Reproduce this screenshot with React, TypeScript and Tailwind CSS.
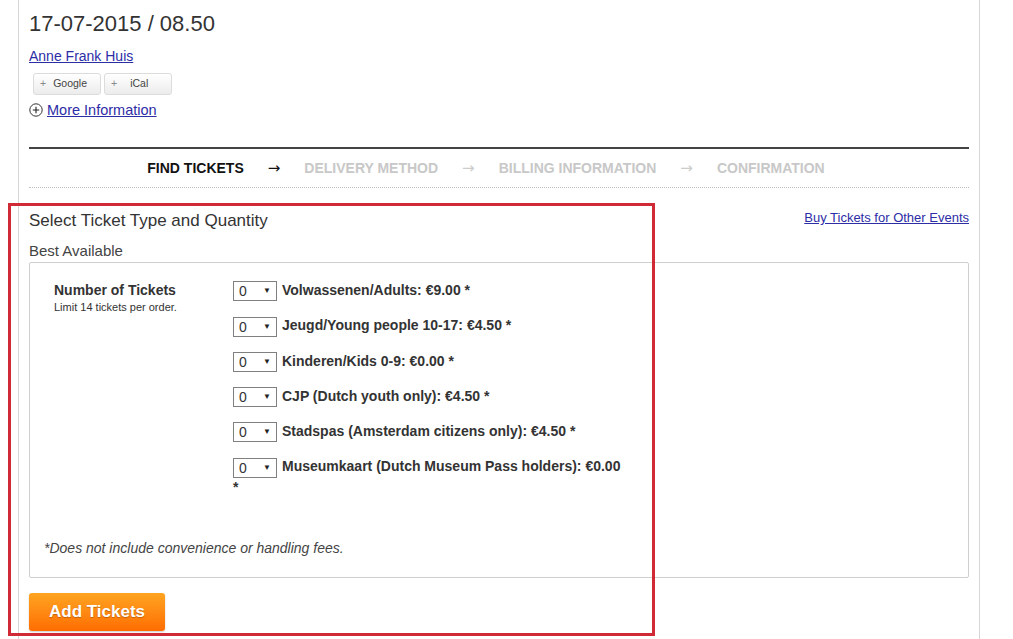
import React from 'react';

const rows = [
  'Volwassenen/Adults: €9.00 *',
  'Jeugd/Young people 10-17: €4.50 *',
  'Kinderen/Kids 0-9: €0.00 *',
  'CJP (Dutch youth only): €4.50 *',
  'Stadspas (Amsterdam citizens only): €4.50 *',
  'Museumkaart (Dutch Museum Pass holders): €0.00 *',
];

const steps = ['FIND TICKETS', 'DELIVERY METHOD', 'BILLING INFORMATION', 'CONFIRMATION'];

const QtySelect = () => (
  <span className="mr-[5px] inline-flex h-[20px] w-[44px] items-center justify-between border border-[#808080] bg-white pl-[5px] pr-[5px] align-middle text-[14px] font-normal text-[#333]">
    <span>0</span>
    <span className="text-[8px] leading-[10px] text-[#222]">▼</span>
  </span>
);

const CalButton = ({ label, gap }: { label: string; gap: string }) => (
  <button
    type="button"
    className="flex h-[22px] w-[68px] items-center rounded-[3px] border border-[#dcdcdc] bg-gradient-to-b from-white to-[#ececec] pl-[6px] text-[10.5px] text-[#444]"
  >
    <span className="text-[#888]">+</span>
    <span className={gap}>{label}</span>
  </button>
);

export default function App() {
  return (
    <div className="relative min-h-screen overflow-hidden bg-white font-['Liberation_Sans',Arial,sans-serif] text-[#333]">
      <div className="ml-[18px] min-h-screen w-[962px] border-x border-[#d6d6d6] px-[10px] pt-[10px]">
        <h1 className="text-[22px] leading-[28px] text-[#333]">17-07-2015 / 08.50</h1>
        <a href="#" className="mt-[10px] block w-fit text-[14px] leading-[16px] text-[#2d2da6] underline">
          Anne Frank Huis
        </a>
        <div className="ml-[4px] mt-[9px] flex gap-[3px]">
          <CalButton label="Google" gap="ml-[7px]" />
          <CalButton label="iCal" gap="ml-[13px]" />
        </div>
        <div className="mt-[7px] flex items-center gap-[4px]">
          <svg width="14" height="14" viewBox="0 0 14 14" className="shrink-0">
            <circle cx="7" cy="7" r="6.2" fill="white" stroke="#333" strokeWidth="1" />
            <path d="M7 3.8v6.4M3.8 7h6.4" stroke="#222" strokeWidth="1.1" />
          </svg>
          <a href="#" className="text-[14.5px] leading-[16px] text-[#2d2da6] underline">
            More Information
          </a>
        </div>

        <div className="mt-[29px] h-[2px] bg-[#444]" />
        <div className="flex h-[39px] items-center justify-center gap-[24px] border-b border-dotted border-[#bdbdbd] pr-[26px] text-[14px] font-bold">
          {steps.map((s, i) => (
            <React.Fragment key={s}>
              {i > 0 && (
                <span
                  className={`font-['DejaVu_Sans',sans-serif] text-[15px] font-normal ${i === 1 ? 'text-[#111]' : 'text-[#ccc]'}`}
                >
                  →
                </span>
              )}
              <span className={i === 0 ? 'text-[#111]' : 'text-[#c8c8c8]'}>{s}</span>
            </React.Fragment>
          ))}
        </div>

        <div className="mt-[23px] flex items-start justify-between">
          <h2 className="text-[17px] leading-[20px] text-[#333]">Select Ticket Type and Quantity</h2>
          <a href="#" className="text-[13px] leading-[14px] text-[#2d2da6] underline">
            Buy Tickets for Other Events
          </a>
        </div>
        <div className="mt-[11px] text-[15px] leading-[18px] text-[#444]">Best Available</div>

        <div className="mt-[2px] h-[316px] rounded-[2px] border border-[#cfcfcf] pl-[24px] pt-[18px]">
          <div className="flex">
            <div className="w-[179px] pt-[1px]">
              <div className="text-[14px] font-bold leading-[16px] text-[#333]">Number of Tickets</div>
              <div className="mt-[3px] text-[11px] leading-[12px] text-[#333]">Limit 14 tickets per order.</div>
            </div>
            <div className="w-[392px] space-y-[15px]">
              {rows.map((r) => (
                <div key={r} className="text-[14px] font-bold leading-[18px] text-[#333]">
                  <QtySelect />
                  {r}
                </div>
              ))}
            </div>
          </div>
          <p className="ml-[-10px] mt-[44px] text-[14px] italic leading-[16px] text-[#444]">
            *Does not include convenience or handling fees.
          </p>
        </div>

        <button
          type="button"
          className="mt-[15px] h-[38px] w-[136px] rounded-[3px] bg-gradient-to-b from-[#ffa420] to-[#ff6c00] text-[17px] font-bold text-white shadow-[0_1px_2px_rgba(0,0,0,0.2)] [text-shadow:0_1px_1px_rgba(0,0,0,0.25)]"
        >
          Add Tickets
        </button>
      </div>

      <div className="pointer-events-none absolute left-[8px] top-[203px] h-[433px] w-[647px] border-[3px] border-[#cf2a35]" />
    </div>
  );
}
